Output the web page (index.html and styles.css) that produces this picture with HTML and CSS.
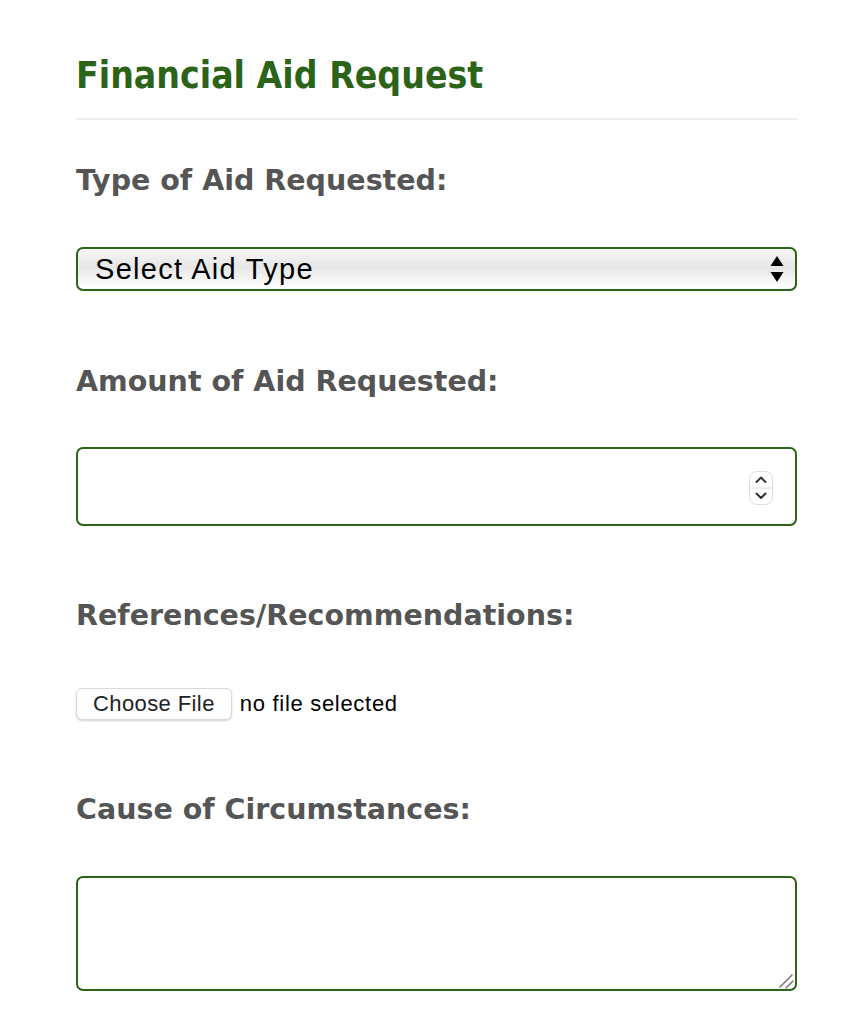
FILE: index.html
```html
<!DOCTYPE html>
<html lang="en">
<head>
<meta charset="utf-8">
<title>Financial Aid Request</title>
<link rel="stylesheet" href="styles.css">
</head>
<body>
<main class="page">
  <h1 class="title">Financial Aid Request</h1>
  <hr class="rule">
  <form class="form">
    <section class="field field-select">
      <label class="label" for="aid-type">Type of Aid Requested:</label>
      <div class="select-wrap">
        <select id="aid-type" class="select">
          <option>Select Aid Type</option>
        </select>
        <svg class="select-arrows" width="14" height="30" viewBox="0 0 14 30" aria-hidden="true">
          <path d="M7 2 L13.5 12 L0.5 12 Z" fill="#000"/>
          <path d="M0.5 18 L13.5 18 L7 28 Z" fill="#000"/>
        </svg>
      </div>
    </section>
    <section class="field field-amount">
      <label class="label" for="amount">Amount of Aid Requested:</label>
      <div class="number-wrap">
        <input id="amount" class="number" type="number">
        <span class="spinner" aria-hidden="true">
          <svg width="24" height="34" viewBox="0 0 24 34">
            <rect x="0.5" y="0.5" width="23" height="33" rx="7" fill="#fff" stroke="#dcdcdc"/>
            <line x1="1" y1="17" x2="23" y2="17" stroke="#dcdcdc"/>
            <path d="M7.5 11 L12 6.5 L16.5 11" fill="none" stroke="#333" stroke-width="2" stroke-linecap="round" stroke-linejoin="round"/>
            <path d="M7.5 22.5 L12 27 L16.5 22.5" fill="none" stroke="#333" stroke-width="2" stroke-linecap="round" stroke-linejoin="round"/>
          </svg>
        </span>
      </div>
    </section>
    <section class="field field-file">
      <label class="label">References/Recommendations:</label>
      <div class="file-row">
        <button type="button" class="file-btn">Choose File</button>
        <span class="file-name">no file selected</span>
      </div>
    </section>
    <section class="field field-cause">
      <label class="label" for="cause">Cause of Circumstances:</label>
      <div class="textarea-wrap">
        <textarea id="cause" class="textarea"></textarea>
        <svg class="resizer" width="16" height="16" viewBox="0 0 16 16" aria-hidden="true">
          <line x1="2" y1="14" x2="14" y2="2" stroke="#7a7a7a" stroke-width="1.6" stroke-linecap="round"/>
          <line x1="8" y1="15" x2="15" y2="8" stroke="#7a7a7a" stroke-width="1.6" stroke-linecap="round"/>
        </svg>
      </div>
    </section>
  </form>
</main>
</body>
</html>
```
FILE: styles.css
```css
html, body {
  margin: 0;
  padding: 0;
  background: #fff;
}

.page {
  width: 721px;
  margin: 0 0 0 76px;
  padding-top: 54px;
}

.title {
  margin: 0;
  font-family: "DejaVu Sans Condensed", "DejaVu Sans", sans-serif;
  font-stretch: condensed;
  font-weight: bold;
  font-size: 37px;
  line-height: 44px;
  color: #2b6318;
}

.rule {
  margin: 20px 0 0;
  border: 0;
  height: 2px;
  background: #eeeeee;
}

.form {
  display: flex;
  flex-direction: column;
}

.label {
  display: block;
  font-family: "DejaVu Sans", sans-serif;
  font-weight: bold;
  font-size: 28.5px;
  line-height: 34px;
  color: #555555;
}

.field-select .label { margin-top: 44px; }
.field-amount .label { margin-top: 74px; }
.field-file .label { margin-top: 73px; }
.field-cause .label { margin-top: 73px; }

.select-wrap {
  position: relative;
  margin-top: 49px;
}

.select {
  display: block;
  width: 100%;
  height: 44px;
  margin: 0;
  padding: 0 0 0 17px;
  border: 2px solid #2b6318;
  border-radius: 7px;
  -webkit-appearance: none;
  appearance: none;
  background: linear-gradient(#f6f6f6 0%, #e6e6e6 45%, #f4f4f4 75%, #ffffff 100%);
  font-family: "Liberation Sans", Arial, sans-serif;
  font-size: 29px;
  letter-spacing: 1.3px;
  color: #000;
}

.select-arrows {
  position: absolute;
  right: 13px;
  top: 7px;
}

.number-wrap {
  position: relative;
  margin-top: 48px;
}

.number {
  display: block;
  box-sizing: border-box;
  width: 100%;
  height: 79px;
  margin: 0;
  border: 2px solid #2b6318;
  border-radius: 7px;
  background: #fff;
  -moz-appearance: textfield;
  appearance: textfield;
  font-family: "Liberation Sans", Arial, sans-serif;
  font-size: 24px;
}

.number::-webkit-inner-spin-button,
.number::-webkit-outer-spin-button {
  -webkit-appearance: none;
  margin: 0;
}

.spinner {
  position: absolute;
  right: 24px;
  top: 24px;
  display: block;
  line-height: 0;
}

.file-row {
  display: flex;
  align-items: center;
  margin-top: 55px;
  gap: 8px;
}

.file-btn {
  height: 32px;
  padding: 0 16px;
  margin: 0;
  border: 1px solid #d9d9d9;
  border-radius: 6px;
  background: #fff;
  box-shadow: 0 1px 2px rgba(0, 0, 0, 0.18);
  font-family: "Liberation Sans", Arial, sans-serif;
  font-size: 22px;
  letter-spacing: 0.4px;
  color: #222;
}

.file-name {
  font-family: "Liberation Sans", Arial, sans-serif;
  font-size: 22px;
  letter-spacing: 0.7px;
  color: #000;
}

.textarea-wrap {
  position: relative;
  margin-top: 49px;
}

.textarea {
  display: block;
  box-sizing: border-box;
  width: 100%;
  height: 115px;
  margin: 0;
  border: 2px solid #2b6318;
  border-radius: 7px;
  background: #fff;
  resize: none;
}

.resizer {
  position: absolute;
  right: 3px;
  bottom: 2px;
  pointer-events: none;
}
```
